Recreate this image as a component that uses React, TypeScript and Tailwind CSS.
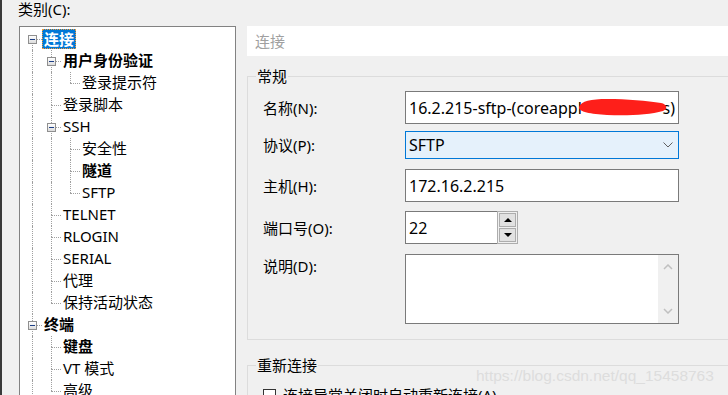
import React from 'react'

type Node = { label: string; bold?: boolean; selected?: boolean; children?: Node[] }

type Row = { node: Node; level: number; hasPrev: boolean; hasNext: boolean; ancestorsNext: boolean[] }

const tree: Node[] = [
  {
    label: '连接',
    bold: true,
    selected: true,
    children: [
      { label: '用户身份验证', bold: true, children: [{ label: '登录提示符' }] },
      { label: '登录脚本' },
      { label: 'SSH', children: [{ label: '安全性' }, { label: '隧道', bold: true }, { label: 'SFTP' }] },
      { label: 'TELNET' },
      { label: 'RLOGIN' },
      { label: 'SERIAL' },
      { label: '代理' },
      { label: '保持活动状态' },
    ],
  },
  {
    label: '终端',
    bold: true,
    children: [{ label: '键盘', bold: true }, { label: 'VT 模式' }, { label: '高级' }],
  },
  { label: '外观', children: [{ label: '边距' }, { label: '高亮' }] },
  { label: '文件传输' },
]

function flatten(nodes: Node[], level: number, anc: boolean[], out: Row[]) {
  nodes.forEach((n, i) => {
    const hasNext = i < nodes.length - 1
    out.push({ node: n, level, hasPrev: i > 0 || level > 0, hasNext, ancestorsNext: anc })
    if (n.children) flatten(n.children, level + 1, [...anc, hasNext], out)
  })
  return out
}

const rows = flatten(tree, 0, [], [])

function TreeRow({ row }: { row: Row }) {
  const { node } = row
  return (
    <div className="flex h-[22px] shrink-0 items-center">
      <div className="w-[3px] shrink-0" />
      {/* 祖先的竖线 */}
      {row.ancestorsNext.map((next, c) => (
        <div key={c} className="relative h-full w-[19px] shrink-0">
          {next && <div className="absolute left-[9px] top-0 h-full w-0 border-l border-dotted border-[#a0a0a0]" />}
        </div>
      ))}
      <div className="relative h-full w-[19px] shrink-0">
        {row.hasPrev && <div className="absolute left-[9px] top-0 h-[11px] w-0 border-l border-dotted border-[#a0a0a0]" />}
        {row.hasNext && <div className="absolute left-[9px] top-[11px] h-[11px] w-0 border-l border-dotted border-[#a0a0a0]" />}
        <div className="absolute left-[9px] top-[11px] h-0 w-[10px] border-t border-dotted border-[#a0a0a0]" />
        {node.children && (
          <div className="absolute left-[5px] top-[7px] h-[9px] w-[9px] border border-[#8f8f8f] bg-gradient-to-b from-white to-[#dcdcdc]">
            <div className="absolute left-[1px] top-[3px] h-[1px] w-[5px] bg-[#1d3f86]" />
          </div>
        )}
      </div>
      <span
        className={`h-[20px] whitespace-nowrap leading-[19px] ${
          node.selected
            ? 'border border-dotted border-[#f29b38] bg-[#0078d7] px-[1px] text-white'
            : 'px-[2px] text-black'
        } ${node.bold ? 'font-bold' : ''}`}
      >
        {node.label}
      </span>
    </div>
  )
}

function Field({ label, children, className = '' }: { label: string; children: React.ReactNode; className?: string }) {
  return (
    <div className={`flex shrink-0 items-center ${className}`}>
      <div className="w-[142px] shrink-0">{label}</div>
      {children}
    </div>
  )
}

export default function App() {
  return (
    <div className="relative flex h-[395px] w-[728px] overflow-hidden bg-[#f0f0f0] font-['Noto_Sans','Noto_Sans_CJK_SC',sans-serif] text-[15px] leading-[20px] text-black">
      {/* 左侧边缘 */}
      <div className="w-[2px] shrink-0 bg-[#3a3a3a]" />

      {/* 类别树 */}
      <div className="flex w-[234px] shrink-0 flex-col">
        <div className="h-[20px] shrink-0 pl-[16px] leading-[18px]">类别(C):</div>
        <div className="ml-[17px] mt-[6px] flex-1 border border-[#828282] bg-white pt-[1px]">
          {rows.map((row, i) => (
            <TreeRow key={i} row={row} />
          ))}
        </div>
      </div>

      {/* 右侧面板 */}
      <div className="ml-[11px] flex w-[500px] shrink-0 flex-col pt-[26px]">
        <div className="flex h-[30px] shrink-0 items-center bg-white pl-[8px] text-[#a0a0a0]">连接</div>

        <fieldset className="mt-[10px] shrink-0 border border-[#dcdcdc] pb-[15px]">
          <legend className="ml-[8px] px-[1px] leading-[20px]">常规</legend>
          <div className="flex flex-col pl-[15px]">
            <Field label="名称(N):" className="mt-[5px]">
              <div className="relative flex h-[33px] w-[274px] items-center overflow-hidden whitespace-nowrap border border-[#7a7a7a] bg-white pl-[3px] pr-[3px] text-[16px]">
                <span>16.2.215-sftp-(coreapp</span>
                <span className="flex-1 overflow-hidden">l</span>
                <span>s)</span>
                {/* 打码 */}
                <svg className="absolute left-[171px] top-[4px]" width="92" height="22" viewBox="0 0 92 22">
                  <path
                    d="M2 11 C4 5 14 3 30 3 C50 3 70 5 84 7 C90 8 91 13 86 15 C72 19 50 20 30 19 C14 18 1 16 2 11 Z"
                    fill="#fe1f1a"
                  />
                </svg>
              </div>
            </Field>
            <Field label="协议(P):" className="mt-[7px]">
              <div className="flex h-[28px] w-[274px] items-center justify-between border border-[#0078d7] bg-[#e5f1fb] pl-[3px] pr-[5px] text-[16px]">
                <span>SFTP</span>
                <svg width="10" height="6" viewBox="0 0 10 6">
                  <path d="M0.5 0.5 L5 5 L9.5 0.5" fill="none" stroke="#606060" strokeWidth="1" />
                </svg>
              </div>
            </Field>
            <Field label="主机(H):" className="mt-[10px]">
              <div className="flex h-[33px] w-[274px] items-center border border-[#7a7a7a] bg-white pl-[3px] text-[16px]">172.16.2.215</div>
            </Field>
            <Field label="端口号(O):" className="mt-[9px]">
              <div className="flex">
                <div className="flex h-[33px] w-[92px] items-center border border-r-0 border-[#7a7a7a] bg-white pl-[3px] text-[16px]">22</div>
                <div className="flex h-[33px] w-[21px] flex-col gap-[1px] border border-[#adadad] bg-[#f0f0f0] p-[1px]">
                  <div className="flex h-[14px] items-center justify-center border border-[#adadad] bg-[#e1e1e1]">
                    <svg width="8" height="4" viewBox="0 0 8 4">
                      <path d="M0 4 L4 0 L8 4 Z" fill="#000" />
                    </svg>
                  </div>
                  <div className="flex h-[14px] items-center justify-center border border-[#adadad] bg-[#e1e1e1]">
                    <svg width="8" height="4" viewBox="0 0 8 4">
                      <path d="M0 0 L4 4 L8 0 Z" fill="#000" />
                    </svg>
                  </div>
                </div>
              </div>
            </Field>
            <div className="mt-[10px] flex shrink-0 items-start">
              <div className="w-[142px] shrink-0 pt-[2px]">说明(D):</div>
              <div className="flex h-[70px] w-[274px] justify-end border border-[#7a7a7a] bg-white">
                <div className="flex w-[20px] flex-col items-center justify-between bg-[#f0f0f0] py-[9px]">
                  <svg width="10" height="6" viewBox="0 0 10 6">
                    <path d="M1 5 L5 1 L9 5" fill="none" stroke="#c0c0c0" strokeWidth="1.5" />
                  </svg>
                  <svg width="10" height="6" viewBox="0 0 10 6">
                    <path d="M1 1 L5 5 L9 1" fill="none" stroke="#c0c0c0" strokeWidth="1.5" />
                  </svg>
                </div>
              </div>
            </div>
          </div>
        </fieldset>

        <fieldset className="mt-[15px] shrink-0 border border-[#dcdcdc] pb-[15px]">
          <legend className="ml-[8px] px-[1px] leading-[20px]">重新连接</legend>
          <div className="mt-[10px] flex items-center gap-[7px] pl-[15px]">
            <div className="h-[13px] w-[13px] border border-[#333] bg-white" />
            <span>连接异常关闭时自动重新连接(A)</span>
          </div>
        </fieldset>
      </div>

      {/* 水印 */}
      <div className="absolute left-[476px] top-[366px] whitespace-nowrap font-['Liberation_Sans',sans-serif] text-[15.5px] leading-[20px] text-[#dddddd]">
        https://blog.csdn.net/qq_15458763
      </div>
    </div>
  )
}
